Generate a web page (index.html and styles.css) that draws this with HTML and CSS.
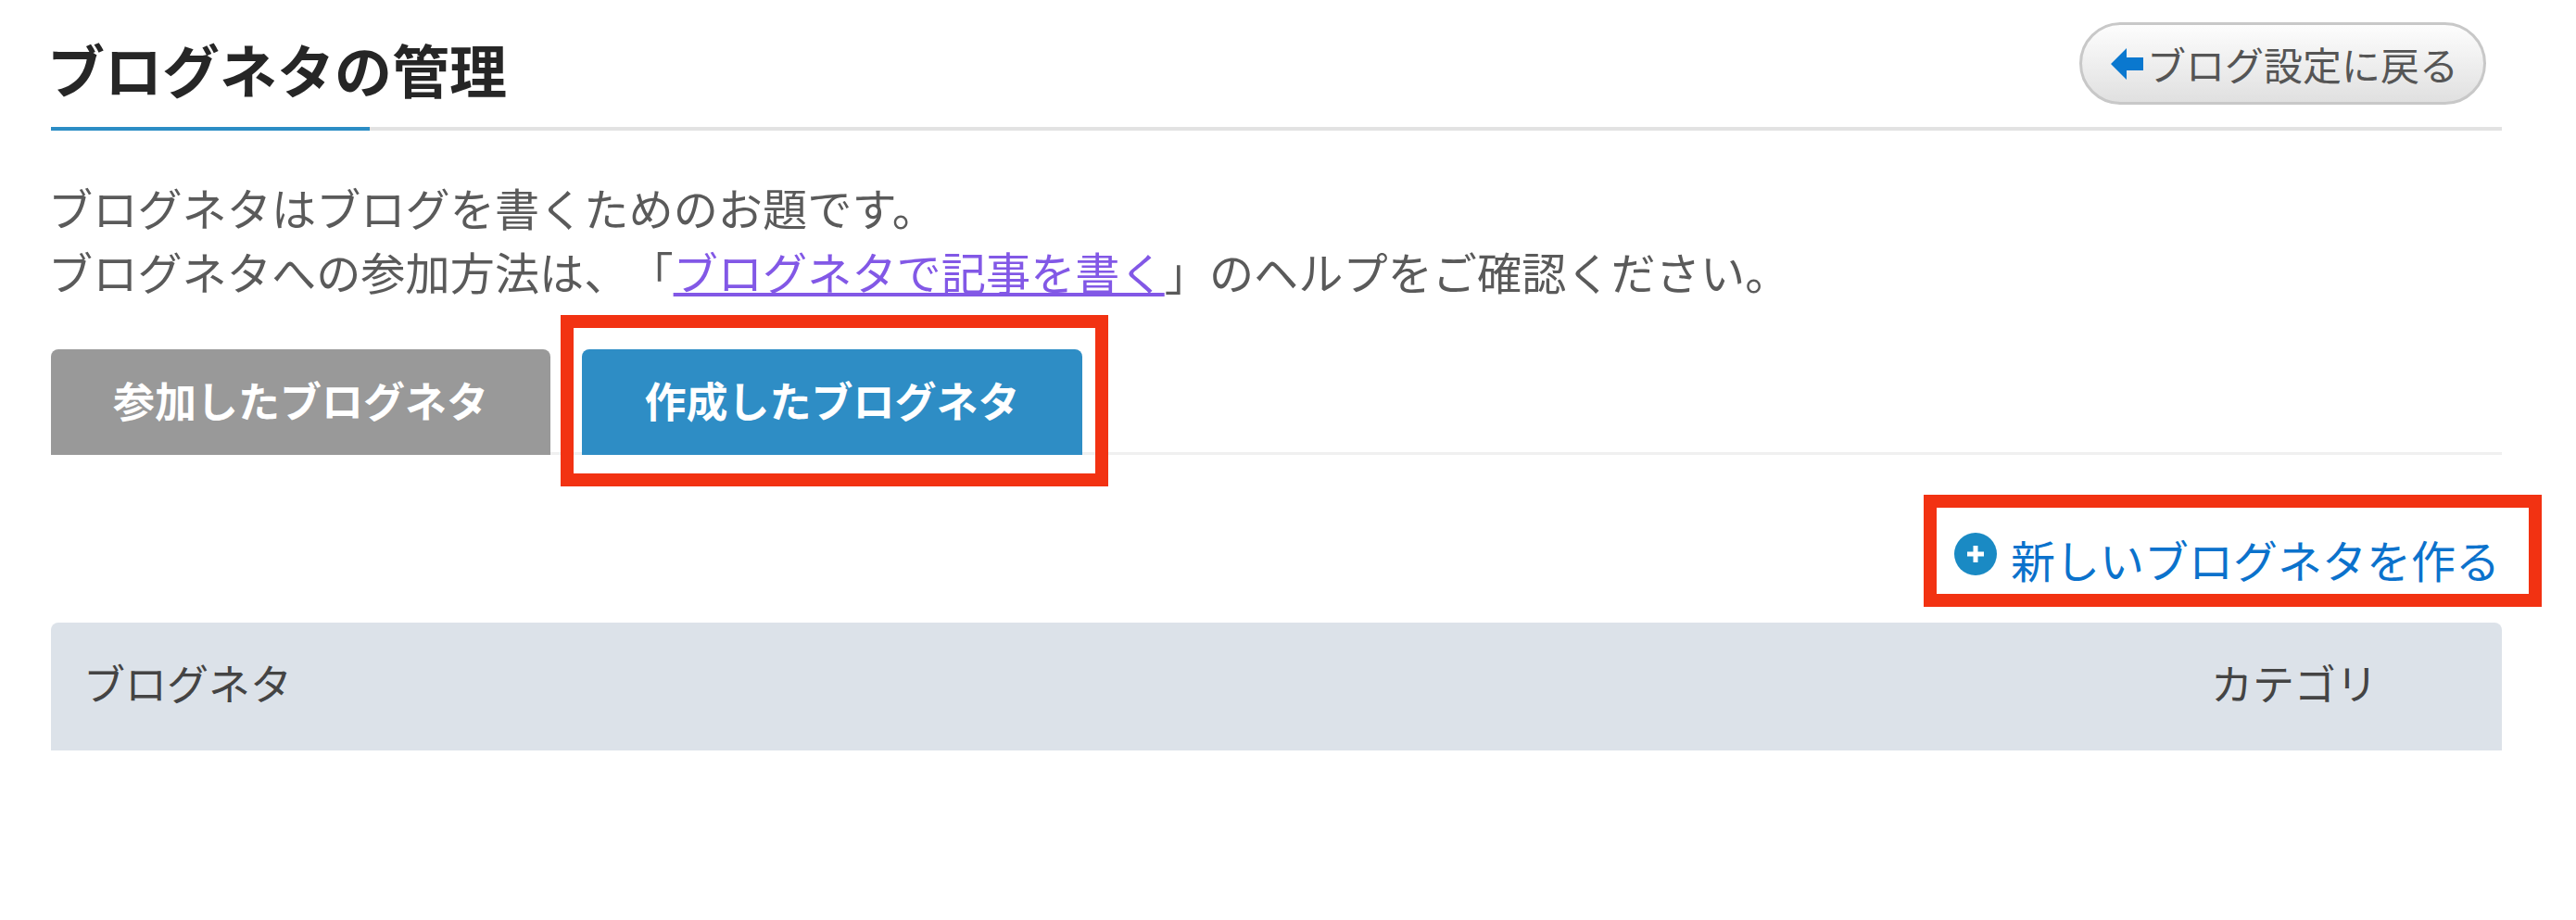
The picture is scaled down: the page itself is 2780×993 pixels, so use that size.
FILE: index.html
```html
<!DOCTYPE html>
<html lang="ja">
<head>
    <meta charset="UTF-8">
    <meta name="viewport" content="width=device-width, initial-scale=1.0">
    <title>ブログネタの管理</title>
    <link rel="stylesheet" href="styles.css">
</head>
<body>
    <div class="page">
        <div class="page-header">
            <h1 class="page-title">ブログネタの管理</h1>
            <a class="back-button" href="#">
                <svg class="back-arrow" viewBox="0 0 35 34" aria-hidden="true">
                    <path d="M0 17 L17 0 L17 10 L35 10 L35 24 L17 24 L17 34 Z"/>
                </svg>
                ブログ設定に戻る
            </a>
        </div>

        <p class="intro">
            ブログネタはブログを書くためのお題です。<br>
            ブログネタへの参加方法は、「<a class="intro-link" href="#">ブログネタで記事を書く</a>」のヘルプをご確認ください。
        </p>

        <div class="tabs">
            <div class="tab">参加したブログネタ</div>
            <div class="tab tab-active">
                作成したブログネタ
                <span class="tab-callout"></span>
            </div>
        </div>

        <div class="toolbar">
            <a class="new-link" href="#">
                <svg class="new-icon" viewBox="0 0 46 46" aria-hidden="true">
                    <circle cx="23" cy="23" r="23"/>
                    <path d="M23 14 V32 M14 23 H32"/>
                </svg>
                新しいブログネタを作る
            </a>
        </div>

        <div class="table-head">
            <div class="table-col">ブログネタ</div>
            <div class="table-col table-col-category">カテゴリ</div>
        </div>
    </div>
</body>
</html>
```

FILE: styles.css
```css
body {
    margin: 0;
    background-color: #fff;
    color: #555;
    font-family: "Noto Sans CJK JP", "Noto Sans", sans-serif;
    text-spacing-trim: space-all;
}

a {
    text-decoration: none;
}

.page {
    width: 2645px;
    margin-left: 55px;
}

.page-header {
    position: relative;
    display: flex;
    justify-content: space-between;
    align-items: flex-start;
    height: 113px;
    padding: 24px 17px 0 0;
    border-bottom: 4px solid #e2e2e2;
}

.page-header::after {
    content: "";
    position: absolute;
    left: 0;
    bottom: -4px;
    width: 344px;
    height: 4px;
    background-color: #2b8dc5;
}

.page-title {
    margin: 6px 0 0 -4px;
    font-size: 62px;
    line-height: 89px;
    font-weight: 700;
    color: #262626;
}

.back-button {
    display: flex;
    align-items: center;
    gap: 4px;
    box-sizing: border-box;
    width: 439px;
    height: 89px;
    padding-left: 31px;
    border: 3px solid #c8c8c8;
    border-radius: 45px;
    background: linear-gradient(#fdfdfd, #e0e0e0);
    font-size: 42px;
    color: #555;
    white-space: nowrap;
}

.back-arrow {
    width: 35px;
    height: 34px;
    fill: #0a78cf;
}

.intro {
    margin: 48px 0 50px -3px;
    font-size: 48.2px;
    line-height: 69px;
    color: #5a5a5a;
}

.intro-link {
    color: #8258e6;
    text-decoration: underline;
}

.tabs {
    display: flex;
    gap: 34px;
    border-bottom: 3px solid #f0f0f0;
}

.tab {
    position: relative;
    width: 539px;
    height: 114px;
    margin-bottom: -3px;
    border-radius: 8px 8px 0 0;
    background-color: #999;
    color: #fff;
    font-size: 45px;
    font-weight: 700;
    line-height: 110px;
    text-align: center;
}

.tab-active {
    width: 540px;
    background-color: #2e8dc5;
}

.tab-callout {
    position: absolute;
    top: -37px;
    left: -23px;
    right: -28px;
    bottom: -34px;
    border: 14px solid #f23212;
}

.toolbar {
    display: flex;
    justify-content: flex-end;
    margin: 43px -43px 17px 0;
}

.new-link {
    display: flex;
    align-items: center;
    gap: 15px;
    box-sizing: border-box;
    width: 667px;
    height: 121px;
    padding: 16px 0 0 19px;
    border: 14px solid #f23212;
    font-size: 48px;
    color: #0b72cc;
    white-space: nowrap;
}

.new-icon {
    width: 46px;
    height: 46px;
    margin-top: -10px;
    flex-shrink: 0;
}

.new-icon circle {
    fill: #1a8ac4;
}

.new-icon path {
    stroke: #fff;
    stroke-width: 5;
    fill: none;
}

.table-head {
    display: flex;
    justify-content: space-between;
    align-items: center;
    height: 138px;
    padding: 0 134px 10px 35px;
    box-sizing: border-box;
    border-radius: 8px 8px 0 0;
    background-color: #dce2e9;
    color: #444;
    font-size: 45px;
}
```
